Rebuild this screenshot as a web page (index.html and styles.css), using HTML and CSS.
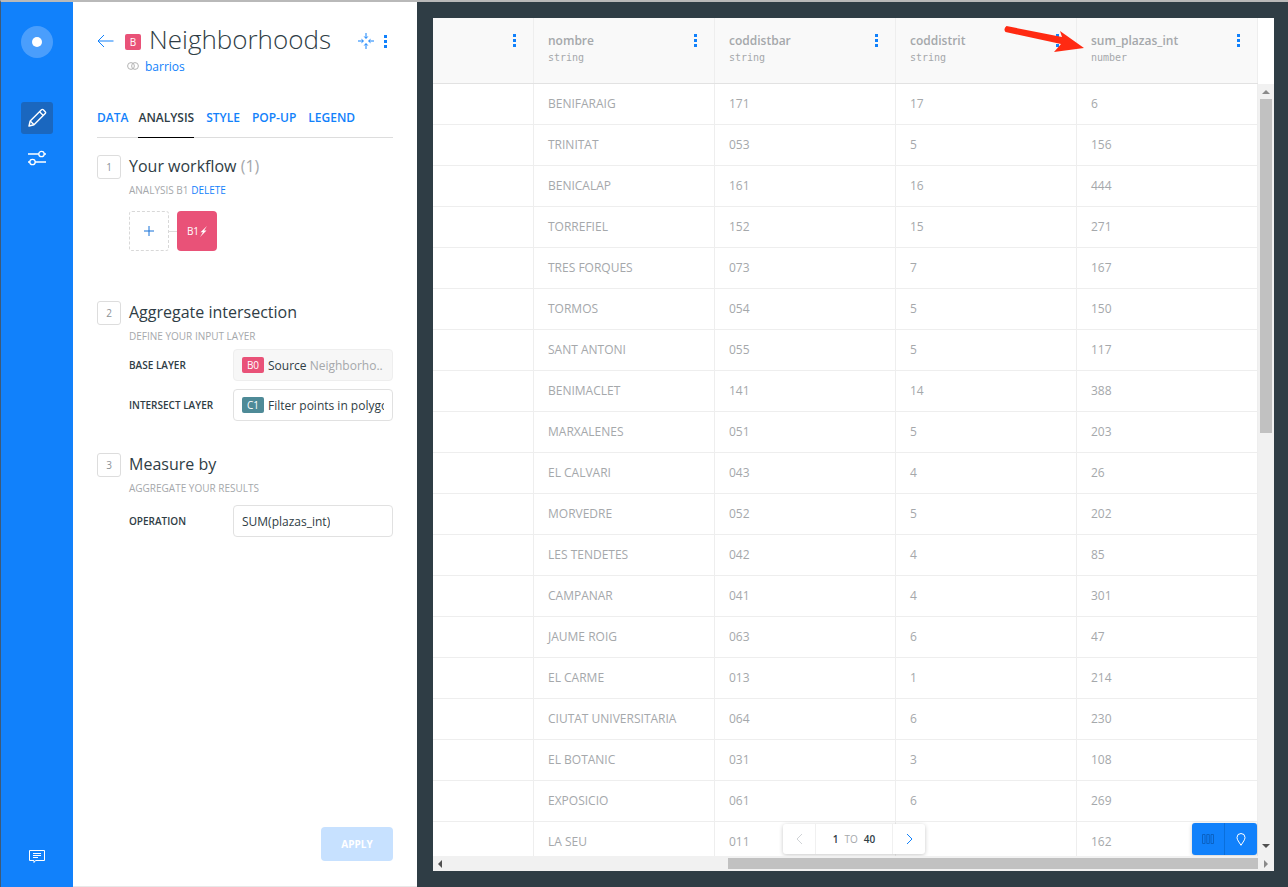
FILE: index.html
```html
<!DOCTYPE html>
<html lang="en">
<head>
<meta charset="utf-8">
<title>Neighborhoods</title>
<link rel="stylesheet" href="styles.css">
</head>
<body>
<div class="app">
  <nav class="rail">
    <div class="logo"><span class="logo-dot"></span></div>
    <div class="rail-btn active">
      <svg width="20" height="20" viewBox="0 0 20 20" fill="none" stroke="#fff" stroke-width="1.4" stroke-linejoin="round"><path d="M2 18l1.2-5L14.5 1.8a1.3 1.3 0 0 1 1.8 0l1.9 1.9a1.3 1.3 0 0 1 0 1.8L7 16.8z"/><path d="M12.6 3.7l3.7 3.7M3.2 13l3.8 3.8"/></svg>
    </div>
    <div class="rail-btn">
      <svg width="20" height="16" viewBox="0 0 20 16" fill="none" stroke="#fff" stroke-width="1.3"><path d="M1 4h11M17 4h2M1 12h2M8 12h11"/><circle cx="14.500" cy="4" r="2.700"/><circle cx="5.500" cy="12" r="2.700"/></svg>
    </div>
    <div class="rail-foot">
      <svg width="16" height="14" viewBox="0 0 16 14" fill="none" stroke="#fff"><path d="M.5.5h15v10H6.500L5 12.500v-2H.5z"/><path d="M4 3.500h8M4 5.500h8M4 7.500h5"/></svg>
    </div>
  </nav>

  <aside class="panel">
    <header class="head">
      <svg class="back" width="17" height="14" viewBox="0 0 17 14" fill="none" stroke="#1181fb" stroke-width="1"><path d="M16.500 7H1M7 1L1 7l6 6"/></svg>
      <span class="badge badge-b">B</span>
      <h1 class="title">Neighborhoods</h1>
      <svg class="collapse" width="16" height="16" viewBox="0 0 16 16" fill="none" stroke="#1181fb"><path d="M8 0v5M6.300 3.500L8 5.500l1.700-2M8 16v-5M6.300 12.500L8 10.500l1.700 2M0 8h5M3.500 6.300L5.500 8l-2 1.700M16 8h-5M12.500 6.300L10.500 8l2 1.700"/></svg>
      <svg class="kebab head-kebab" width="3" height="13" viewBox="0 0 3 13"><path fill="#1181fb" d="M0 0h3v3H0zM0 5h3v3H0zM0 10h3v3H0z"/></svg>
    </header>
    <div class="source">
      <svg width="12" height="8" viewBox="0 0 12 8" fill="none" stroke="#b4b4b4"><circle cx="4" cy="4" r="3.400"/><circle cx="8" cy="4" r="3.400"/></svg>
      <a class="source-link">barrios</a>
    </div>
    <div class="tabs">
      <a class="tab tab-tight">DATA</a>
      <a class="tab current">ANALYSIS</a>
      <a class="tab">STYLE</a>
      <a class="tab">POP-UP</a>
      <a class="tab">LEGEND</a>
    </div>

    <section class="step step-1">
      <span class="num">1</span>
      <div class="step-body">
        <h2 class="step-title">Your workflow <span class="muted">(1)</span></h2>
        <p class="step-sub">ANALYSIS B1 <a class="link">DELETE</a></p>
        <div class="flow">
          <span class="flow-add">
            <svg width="10" height="10" viewBox="0 0 10 10" stroke="#1470d8"><path d="M5 0v10M0 5h10"/></svg>
          </span>
          <span class="flow-line"></span>
          <span class="flow-node">B1<svg width="7" height="11" viewBox="0 0 7 11"><path fill="#fff" d="M7 0L.5 6.200H3L0 11l6.500-6.400H4z"/></svg></span>
        </div>
      </div>
    </section>

    <section class="step step-2">
      <span class="num">2</span>
      <div class="step-body">
        <h2 class="step-title">Aggregate intersection</h2>
        <p class="step-sub">DEFINE YOUR INPUT LAYER</p>
        <div class="field">
          <label class="label">BASE LAYER</label>
          <div class="control disabled"><span class="tag tag-b">B0</span><span class="ctext">Source <span class="muted">Neighborho..</span></span></div>
        </div>
        <div class="field">
          <label class="label">INTERSECT LAYER</label>
          <div class="control"><span class="tag tag-c">C1</span><span class="ctext">Filter points in polygons</span></div>
        </div>
      </div>
    </section>

    <section class="step step-3">
      <span class="num">3</span>
      <div class="step-body">
        <h2 class="step-title">Measure by</h2>
        <p class="step-sub">AGGREGATE YOUR RESULTS</p>
        <div class="field field-op">
          <label class="label">OPERATION</label>
          <div class="control"><span class="ctext">SUM(plazas_int)</span></div>
        </div>
      </div>
    </section>

    <div class="foot"><button class="apply">APPLY</button></div>
  </aside>

  <main class="stage">
    <div class="frame">
      <div class="frame-main">
        <div class="grid">
          <div class="row row-head">
            <div class="cell cell-first"><svg class="kebab" width="3" height="13" viewBox="0 0 3 13"><path fill="#1181fb" d="M0 0h3v3H0zM0 5h3v3H0zM0 10h3v3H0z"/></svg></div>
            <div class="cell"><div><div class="col-name">nombre</div><div class="col-type">string</div></div><svg class="kebab" width="3" height="13" viewBox="0 0 3 13"><path fill="#1181fb" d="M0 0h3v3H0zM0 5h3v3H0zM0 10h3v3H0z"/></svg></div>
            <div class="cell"><div><div class="col-name">coddistbar</div><div class="col-type">string</div></div><svg class="kebab" width="3" height="13" viewBox="0 0 3 13"><path fill="#1181fb" d="M0 0h3v3H0zM0 5h3v3H0zM0 10h3v3H0z"/></svg></div>
            <div class="cell"><div><div class="col-name">coddistrit</div><div class="col-type">string</div></div><svg class="kebab" width="3" height="13" viewBox="0 0 3 13"><path fill="#1181fb" d="M0 0h3v3H0zM0 5h3v3H0zM0 10h3v3H0z"/></svg></div>
            <div class="cell"><div><div class="col-name">sum_plazas_int</div><div class="col-type">number</div></div><svg class="kebab" width="3" height="13" viewBox="0 0 3 13"><path fill="#1181fb" d="M0 0h3v3H0zM0 5h3v3H0zM0 10h3v3H0z"/></svg></div>
          </div>
          <div class="row"><div class="cell cell-first"></div><div class="cell">BENIFARAIG</div><div class="cell">171</div><div class="cell">17</div><div class="cell">6</div></div>
          <div class="row"><div class="cell cell-first"></div><div class="cell">TRINITAT</div><div class="cell">053</div><div class="cell">5</div><div class="cell">156</div></div>
          <div class="row"><div class="cell cell-first"></div><div class="cell">BENICALAP</div><div class="cell">161</div><div class="cell">16</div><div class="cell">444</div></div>
          <div class="row"><div class="cell cell-first"></div><div class="cell">TORREFIEL</div><div class="cell">152</div><div class="cell">15</div><div class="cell">271</div></div>
          <div class="row"><div class="cell cell-first"></div><div class="cell">TRES FORQUES</div><div class="cell">073</div><div class="cell">7</div><div class="cell">167</div></div>
          <div class="row"><div class="cell cell-first"></div><div class="cell">TORMOS</div><div class="cell">054</div><div class="cell">5</div><div class="cell">150</div></div>
          <div class="row"><div class="cell cell-first"></div><div class="cell">SANT ANTONI</div><div class="cell">055</div><div class="cell">5</div><div class="cell">117</div></div>
          <div class="row"><div class="cell cell-first"></div><div class="cell">BENIMACLET</div><div class="cell">141</div><div class="cell">14</div><div class="cell">388</div></div>
          <div class="row"><div class="cell cell-first"></div><div class="cell">MARXALENES</div><div class="cell">051</div><div class="cell">5</div><div class="cell">203</div></div>
          <div class="row"><div class="cell cell-first"></div><div class="cell">EL CALVARI</div><div class="cell">043</div><div class="cell">4</div><div class="cell">26</div></div>
          <div class="row"><div class="cell cell-first"></div><div class="cell">MORVEDRE</div><div class="cell">052</div><div class="cell">5</div><div class="cell">202</div></div>
          <div class="row"><div class="cell cell-first"></div><div class="cell">LES TENDETES</div><div class="cell">042</div><div class="cell">4</div><div class="cell">85</div></div>
          <div class="row"><div class="cell cell-first"></div><div class="cell">CAMPANAR</div><div class="cell">041</div><div class="cell">4</div><div class="cell">301</div></div>
          <div class="row"><div class="cell cell-first"></div><div class="cell">JAUME ROIG</div><div class="cell">063</div><div class="cell">6</div><div class="cell">47</div></div>
          <div class="row"><div class="cell cell-first"></div><div class="cell">EL CARME</div><div class="cell">013</div><div class="cell">1</div><div class="cell">214</div></div>
          <div class="row"><div class="cell cell-first"></div><div class="cell">CIUTAT UNIVERSITARIA</div><div class="cell">064</div><div class="cell">6</div><div class="cell">230</div></div>
          <div class="row"><div class="cell cell-first"></div><div class="cell">EL BOTANIC</div><div class="cell">031</div><div class="cell">3</div><div class="cell">108</div></div>
          <div class="row"><div class="cell cell-first"></div><div class="cell">EXPOSICIO</div><div class="cell">061</div><div class="cell">6</div><div class="cell">269</div></div>
          <div class="row"><div class="cell cell-first"></div><div class="cell">LA SEU</div><div class="cell">011</div><div class="cell"></div><div class="cell">162</div></div>

          <div class="pager">
            <span class="pager-btn"><svg width="7" height="12" viewBox="0 0 7 12" fill="none" stroke="#d0d3d6"><path d="M6 1L1 6l5 5"/></svg></span>
            <span class="pager-info"><b class="pager-num">1</b><span class="pager-to">TO</span><b class="pager-num">40</b></span>
            <span class="pager-btn"><svg width="7" height="12" viewBox="0 0 7 12" fill="none" stroke="#1181fb"><path d="M1 1l5 5-5 5"/></svg></span>
          </div>
          <div class="views">
            <span class="view">
              <svg width="12" height="10" viewBox="0 0 12 10" fill="none" stroke="#0a62c4"><path d="M.5.500h2.500v9H.5zM4.800.500h2.500v9H4.800zM9 .500h2.500v9H9z"/></svg>
            </span>
            <span class="view">
              <svg width="10" height="13" viewBox="0 0 10 13" fill="none" stroke="#fff"><path d="M5 12.300C3 9 1 6.800 1 4.500A4 4 0 0 1 9 4.500C9 6.800 7 9 5 12.300z"/></svg>
            </span>
          </div>
        </div>
        <div class="vbar">
          <span class="arrow-up"></span>
          <span class="vthumb"></span>
          <span class="arrow-down"></span>
        </div>
      </div>
      <div class="hbar">
        <span class="arrow-left"></span>
        <span class="hthumb"></span>
        <span class="arrow-right"></span>
      </div>
      <svg class="callout" width="84" height="28" viewBox="0 0 84 28"><path fill="#ff2a12" d="M2.500 0L58 11L56 5L80 22L50 26L57 18L1.500 6Q-1 3 2.500 0z"/></svg>
    </div>
  </main>
</div>
</body>
</html>
```
FILE: styles.css
```css
* { box-sizing: border-box; }
html, body { margin: 0; height: 100%; }
body { font-family: "Open Sans", sans-serif; background: #2f3d45; overflow: hidden; color: #2f3d45; }
h1, h2, p { margin: 0; font-weight: 400; }

.app { display: flex; height: 887px; border-top: 2px solid #b9b9b9; border-left: 1px solid #3d5a78; }

.rail { width: 72px; flex: none; background: #1181fb; display: flex; flex-direction: column; align-items: center; padding-top: 24px; }
.logo { width: 32px; height: 32px; border-radius: 50%; background: #4a9efc; display: flex; align-items: center; justify-content: center; }
.logo-dot { width: 10px; height: 10px; border-radius: 50%; background: #fff; }
.rail-btn { width: 32px; height: 32px; border-radius: 3px; display: flex; align-items: center; justify-content: center; }
.rail-btn.active { background: #1a67bf; margin-top: 44px; margin-bottom: 8px; }
.rail-foot { margin-top: auto; padding-bottom: 23px; display: flex; }

.panel { width: 344px; flex: none; background: #fff; border-bottom: 1px solid #e8e8e8; padding: 0 24px; display: flex; flex-direction: column; }
.head { display: flex; align-items: center; height: 32px; margin-top: 21px; }
.back { margin-right: 11px; margin-top: 4px; flex: none; }
.badge { width: 16px; height: 16px; border-radius: 2px; font-size: 10px; line-height: 16px; text-align: center; color: #fff; flex: none; margin-right: 8px; margin-top: 6px; }
.badge-b { background: #e95278; }
.title { font-size: 26px; font-weight: 300; line-height: 32px; color: #2f3d45; flex: 1; }
.collapse { margin-right: 10px; margin-top: 3px; flex: none; }
.kebab { display: block; flex: none; }
.head-kebab { margin-right: 6px; margin-top: 4px; }
.source { display: flex; align-items: center; gap: 6px; padding-left: 30px; height: 18px; margin-top: 2px; }
.source-link { font-size: 12px; color: #1181fb; }
.tabs { display: flex; gap: 12px; margin-top: 24px; border-bottom: 1px solid #ddd; height: 39px; align-items: flex-start; padding-top: 10px; }
.tab { font-size: 12px; font-weight: 600; line-height: 18px; color: #1181fb; height: 29px; }
.tab-tight { margin-right: -2px; }
.tab.current { color: #2f3d45; border-bottom: 1px solid #000; }

.step { display: flex; gap: 8px; }
.step-1 { margin-top: 17px; }
.step-2 { margin-top: 50px; }
.step-3 { margin-top: 32px; }
.num { width: 24px; height: 24px; flex: none; border: 1px solid #ddd; border-radius: 3px; font-size: 10px; line-height: 22px; text-align: center; color: #8c9297; }
.step-body { flex: 1; min-width: 0; }
.step-title { font-size: 16px; line-height: 22px; color: #2f3d45; }
.muted { color: #a5a8ab; }
.step-sub { font-size: 10px; line-height: 14px; color: #a5a8ab; margin-top: 6px; }
.link { color: #1181fb; }
.flow { display: flex; align-items: center; margin-top: 14px; }
.flow-add { width: 40px; height: 40px; border: 1px dashed #d8d8d8; border-radius: 3px; display: flex; align-items: center; justify-content: center; }
.flow-line { width: 8px; height: 1px; background: #ddd; }
.flow-node { width: 40px; height: 40px; border-radius: 4px; background: #e95278; color: #fff; font-size: 10px; display: flex; align-items: center; justify-content: center; gap: 1px; }

.field { display: flex; align-items: center; margin-top: 8px; }
.step-sub + .field { margin-top: 6px; }
.step-sub + .field-op { margin-top: 10px; }
.label { width: 104px; flex: none; font-size: 10px; font-weight: 600; color: #2f3d45; }
.control { width: 160px; height: 32px; border: 1px solid #e1e1e1; border-radius: 4px; padding: 0 8px; display: flex; align-items: center; gap: 4px; overflow: hidden; white-space: nowrap; }
.control.disabled { background: #f7f7f7; border-color: #eee; }
.tag { width: 22px; height: 16px; border-radius: 2px; font-size: 10px; line-height: 16px; text-align: center; color: #fff; flex: none; }
.tag-b { background: #e95278; }
.tag-c { background: #4e8a97; }
.ctext { font-size: 12px; color: #2f3d45; overflow: hidden; }

.foot { margin-top: auto; display: flex; justify-content: flex-end; padding-bottom: 25px; }
.apply { width: 72px; height: 34px; border: 0; border-radius: 4px; background: #c7e1ff; color: #fff; font-family: inherit; font-size: 10px; font-weight: 700; }

.stage { flex: 1; padding: 16px 14px 16px 16px; min-width: 0; }
.frame { position: relative; width: 841px; height: 853px; background: #fff; display: flex; flex-direction: column; }
.frame-main { flex: 1; display: flex; min-height: 0; }
.grid { position: relative; width: 825px; height: 838px; overflow: hidden; flex: none; }
.row { display: flex; height: 41px; border-bottom: 1px solid #eee; }
.row-head { height: 66px; background: #f9f9f9; border-bottom: 1px solid #e2e2e2; }
.cell { width: 181px; flex: none; border-right: 1px solid #eee; padding: 0 17px 0 14px; font-size: 12px; line-height: 40px; color: #a5a8ab; white-space: nowrap; display: flex; justify-content: space-between; }
.cell-first { width: 101px; }
.row-head .cell { padding-top: 14px; }
.row-head .kebab { margin-top: 2px; }
.col-name { font-size: 12px; font-weight: 600; line-height: 18px; color: #a5a8ab; }
.col-type { font-family: "DejaVu Sans Mono", monospace; font-size: 10px; line-height: 16px; color: #a5a8ab; }
.row-head .cell-first { justify-content: flex-end; }

.pager { position: absolute; left: 350px; top: 806px; width: 142px; height: 30px; background: #fff; border-radius: 3px; box-shadow: 0 1px 4px rgba(0,0,0,.22); display: flex; align-items: center; }
.pager-btn { width: 32px; height: 100%; display: flex; align-items: center; justify-content: center; flex: none; }
.pager-info { flex: 1; height: 100%; border-left: 1px solid #f0f0f0; border-right: 1px solid #f0f0f0; display: flex; align-items: center; justify-content: center; gap: 6px; font-size: 10px; }
.pager-num { font-weight: 600; color: #2f3d45; }
.pager-to { color: #a5a8ab; }
.views { position: absolute; right: 1px; top: 805px; width: 65px; height: 32px; border-radius: 3px; background: #1181fb; box-shadow: 0 1px 4px rgba(0,0,0,.2); display: flex; }
.view { flex: 1; display: flex; align-items: center; justify-content: center; }
.view + .view { border-left: 1px solid #0a6fdc; }

.vbar { width: 16px; flex: none; background: #f1f1f1; margin-top: 66px; height: 772px; position: relative; }
.vthumb { position: absolute; left: 2px; top: 15px; width: 12px; height: 334px; background: #c1c1c1; }
.arrow-up, .arrow-down, .arrow-left, .arrow-right { position: absolute; width: 0; height: 0; border: 4px solid transparent; }
.arrow-up { left: 4px; top: 6px; border-bottom-color: #8a8a8a; border-top-width: 0; }
.arrow-down { left: 4px; bottom: 8px; border-top-color: #505050; border-bottom-width: 0; }
.hbar { height: 15px; background: #f1f1f1; position: relative; flex: none; }
.hthumb { position: absolute; left: 295px; top: 2px; width: 530px; height: 11px; background: #c1c1c1; }
.arrow-left { left: 5px; top: 4px; border-right-color: #505050; border-left-width: 0; }
.arrow-right { right: 6px; top: 4px; border-left-color: #8a8a8a; border-right-width: 0; }
.callout { position: absolute; left: 571px; top: 8px; overflow: visible; }
```
